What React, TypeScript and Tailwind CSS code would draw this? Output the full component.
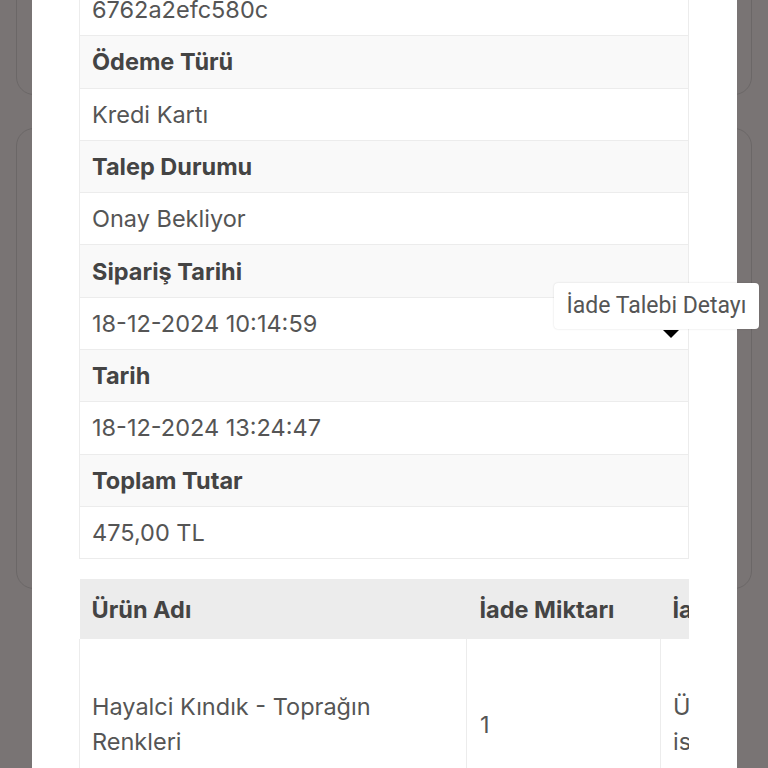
import React from "react";

const rows: [string, string][] = [
  ["", "6762a2efc580c"],
  ["Ödeme Türü", "Kredi Kartı"],
  ["Talep Durumu", "Onay Bekliyor"],
  ["Sipariş Tarihi", "18-12-2024 10:14:59"],
  ["Tarih", "18-12-2024 13:24:47"],
  ["Toplam Tutar", "475,00 TL"],
];

export default function App() {
  return (
    <div className="relative h-[768px] w-[768px] overflow-hidden bg-[#797474]" style={{ fontFamily: "Inter, 'Noto Sans', sans-serif" }}>
      {/* background cards */}
      <div className="flex flex-col gap-[33px] px-4 pt-0">
        <div className="-mt-[40px] h-[135px] rounded-[18px] border border-[#6b6767]" />
        <div className="h-[461px] rounded-[18px] border border-[#6b6767]" />
      </div>

      {/* modal */}
      <div className="absolute inset-y-0 left-[32px] w-[705px] bg-white">
        <div className="px-[47px]">
          <div className="-mt-[17px] w-[610px] border-x border-b border-[#ececec] text-[23.5px]">
            {rows.map(([label, value], i) => (
              <React.Fragment key={i}>
                {label !== "" && (
                  <div className="flex h-[52.3px] items-center border-t border-[#ececec] bg-[#f9f9f9] px-[12px] font-bold text-[#444]">
                    {label}
                  </div>
                )}
                <div className="flex h-[52.3px] items-center border-t border-[#ececec] bg-white px-[12px] text-[#555]">
                  {value}
                </div>
              </React.Fragment>
            ))}
          </div>

          <div className="mt-[20px] w-[610px] overflow-hidden">
            <table className="w-[740px] table-fixed border-collapse text-[23.5px]">
              <colgroup>
                <col className="w-[387px]" />
                <col className="w-[194px]" />
                <col className="w-[159px]" />
              </colgroup>
              <thead>
                <tr className="h-[60px] bg-[#ececec] text-left font-bold text-[#444]">
                  <th className="px-[12px] font-bold">Ürün Adı</th>
                  <th className="px-[13px] font-bold">İade Miktarı</th>
                  <th className="whitespace-nowrap px-[12px] font-bold">İade Nedeni</th>
                </tr>
              </thead>
              <tbody>
                <tr className="h-[170px] text-[#555]">
                  <td className="border-x border-[#ececec] px-[12px] align-middle leading-[35px]">
                    Hayalci Kındık - Toprağın Renkleri
                  </td>
                  <td className="border-x border-[#ececec] px-[13px] align-middle">1</td>
                  <td className="whitespace-nowrap border-x border-[#ececec] px-[12px] align-middle leading-[35px]">
                    Ürün
                    <br />
                    isteğime uygun değil
                  </td>
                </tr>
              </tbody>
            </table>
          </div>
        </div>
      </div>

      {/* tooltip */}
      <div
        className="absolute left-[554px] top-[283px] flex h-[46px] w-[205px] items-center justify-center rounded-[4px] bg-white text-[23px] text-[#555] shadow-[0_0_2px_rgba(0,0,0,0.15)]"
        style={{ fontFamily: "Roboto, 'Noto Sans', sans-serif" }}
      >
        İade Talebi Detayı
      </div>
      <div className="absolute left-[663px] top-[330px] h-0 w-0 border-x-[8px] border-t-[8px] border-x-transparent border-t-black" />
    </div>
  );
}
